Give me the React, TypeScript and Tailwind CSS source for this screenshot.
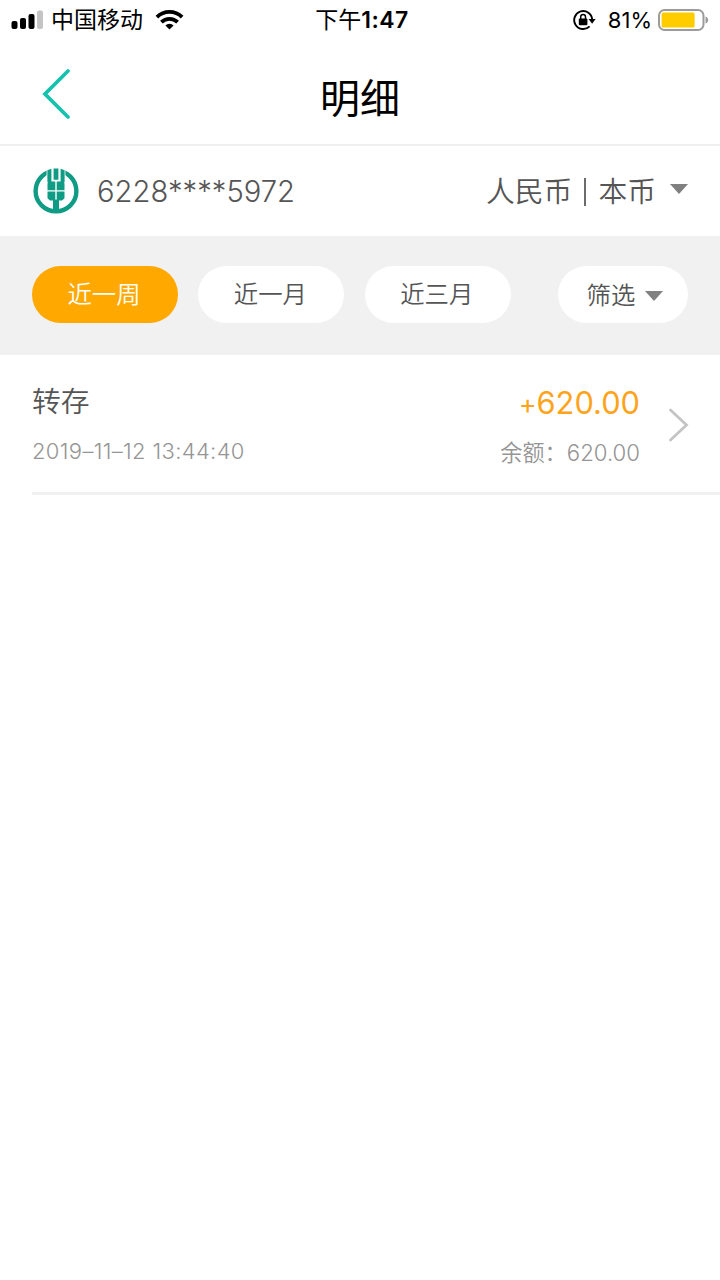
import { useState } from "react";
import clsx from "clsx";

const ranges = ["近一周", "近一月", "近三月"];

const records = [
  {
    name: "转存",
    time: "2019–11–12 13:44:40",
    amount: "620.00",
    balance: "620.00",
  },
];

function StatusBar() {
  return (
    <div className="grid h-10 grid-cols-[1fr_auto_1fr] items-center text-black">
      <div className="flex items-center pl-[11px]">
        <svg width="32" height="20" viewBox="0 0 32 20">
          <rect x="0.5" y="11" width="6" height="8" rx="2" />
          <rect x="9" y="8" width="6" height="11" rx="2" />
          <rect x="17.5" y="4" width="6" height="15" rx="2" />
          <rect x="26" y="0.5" width="6" height="18.5" rx="2" fill="#c4c4c4" />
        </svg>
        <span className="ml-2 text-[23px] leading-10">中国移动</span>
        <svg className="ml-3" width="29" height="20" viewBox="0 0 29 20">
          <g fill="none" stroke="#000" strokeWidth="3.8">
            <path d="M1.9 7.1a18 18 0 0 1 25.2 0" />
            <path d="M6.4 12.2a11.6 11.6 0 0 1 16.2 0" />
          </g>
          <path d="M14.5 19.6l-4.1-4.1a5.8 5.8 0 0 1 8.2 0z" />
        </svg>
      </div>
      <span className="ml-1 text-[23px] leading-10">
        下午<span className="font-semibold tracking-[0.5px]">1:47</span>
      </span>
      <div className="flex items-center justify-end pr-[11px]">
        <svg width="23" height="22" viewBox="0 0 23 22">
          <path
            d="M16.6 17.4a9 9 0 1 1 2.6-6.8"
            fill="none"
            stroke="#000"
            strokeWidth="1.9"
          />
          <path d="M15.6 10h7l-3.5 4.8z" />
          <rect x="5.8" y="9.6" width="8.6" height="6.6" rx="1" />
          <path
            d="M7.7 10V7.8a2.4 2.4 0 0 1 4.8 0V10"
            fill="none"
            stroke="#000"
            strokeWidth="1.5"
          />
        </svg>
        <span className="ml-3 text-[22px] leading-10">81%</span>
        <svg className="ml-1.5" width="51" height="22" viewBox="0 0 51 22">
          <rect
            x="1"
            y="1"
            width="44.5"
            height="20"
            rx="5.5"
            fill="none"
            stroke="#9b9b9b"
            strokeWidth="2"
          />
          <rect x="3.6" y="3.6" width="33" height="14.8" rx="1.5" fill="#ffcc00" />
          <path d="M47.5 7.5c3.6 1 3.6 6 0 7z" fill="#9b9b9b" />
        </svg>
      </div>
    </div>
  );
}

function BankLogo() {
  return (
    <svg width="46" height="46" viewBox="0 0 46 46">
      <circle cx="23" cy="23" r="20.4" fill="none" stroke="#109b84" strokeWidth="4.4" />
      <path d="M13.6 0h18.8v11H13.6z" fill="#fff" />
      <g fill="#109b84">
        <path d="M14.4 2.2l4-1.4v13.6h-4zM27.6.8l4 1.4v12.2h-4z" />
        <path d="M20.6 0.6h4.8v11.2h-4.8z" />
        <path d="M15.6 13.6h6.7v8.6h-7.8v-6.4zM30.4 13.6h-6.7v8.6h7.8v-6.4z" />
        <path d="M14.5 23.6h7.8v9h-5.4l-2.4-2.4zM31.5 23.6h-7.8v9h5.4l2.4-2.4z" />
        <path d="M20 31.6h6v12.9h-6z" />
      </g>
    </svg>
  );
}

function Caret() {
  return (
    <svg width="18" height="10" viewBox="0 0 18 10">
      <path d="M0 0h18L9 10z" fill="#808080" />
    </svg>
  );
}

export default function App() {
  const [active, setActive] = useState<number>(0);

  return (
    <div className="min-h-screen w-full bg-white font-['Inter','Noto_Sans_CJK_SC',sans-serif] text-[#555]">
      <StatusBar />

      <header className="grid h-[106px] grid-cols-[1fr_auto_1fr] items-center border-b-2 border-[#efefef] pt-1">
        <button className="ml-[41px] w-[30px]">
          <svg width="30" height="52" viewBox="0 0 30 52">
            <path
              d="M27 3L4 26l23 23"
              fill="none"
              stroke="#17c1ae"
              strokeWidth="3.8"
              strokeLinecap="round"
            />
          </svg>
        </button>
        <h1 className="pt-2.5 text-[40px] leading-none text-black">明细</h1>
      </header>

      <section className="flex h-[90px] items-center justify-between pl-[33px] pr-8 font-[350]">
        <div className="flex items-center">
          <BankLogo />
          <span className="ml-[18px] pt-0.5 text-[29.2px] leading-none">
            6228****5972
          </span>
        </div>
        <button className="flex items-center">
          <span className="flex items-center pt-0.5 text-[28.8px] leading-none">
            人民币
            <span className="ml-3 mr-3 h-7 w-0.5 bg-[#6c6c6c]" />
            本币
          </span>
          <span className="ml-3.5 pb-1">
            <Caret />
          </span>
        </button>
      </section>

      <section className="flex h-[119px] items-center bg-[#f1f1f1] px-8 pb-0.5 font-[350]">
        <div className="flex gap-[20.4px]">
          {ranges.map((range, index) => (
            <button
              key={range}
              className={clsx(
                "h-[57px] w-[146px] rounded-full pr-0.5 text-[24.4px] leading-none",
                index === active ? "bg-[#ffa800] text-white" : "bg-white",
              )}
              onClick={() => setActive(index)}
            >
              {range}
            </button>
          ))}
        </div>
        <button className="ml-auto flex h-[57px] w-[130px] items-center justify-center gap-2.5 rounded-full bg-white pl-1 pt-0.5 text-[24.4px] leading-none">
          筛选
          <Caret />
        </button>
      </section>

      <ul className="pl-8">
        {records.map((record) => (
          <li
            key={record.time}
            className="flex h-[140px] items-start border-b-[3px] border-[#f1f1f1] pr-[31px] pt-[30px]"
          >
            <div className="flex flex-col font-[350]">
              <span className="text-[28.8px] leading-[34px]">{record.name}</span>
              <span className="mt-4 text-[22px] leading-8 tracking-[0.35px] text-[#959595]">
                {record.time}
              </span>
            </div>
            <div className="ml-auto flex flex-col items-end">
              <span className="text-[30.8px] leading-9 text-[#ffa31a]">
                <span className="text-[27px]">+</span>
                {record.amount}
              </span>
              <span className="mt-3.5 text-[22.2px] font-[350] leading-8 text-[#959595]">
                余额：{record.balance}
              </span>
            </div>
            <svg className="ml-7 mt-[23px]" width="21" height="34" viewBox="0 0 21 34">
              <path
                d="M2.5 2L18.5 17 2.5 32"
                fill="none"
                stroke="#c4c4c4"
                strokeWidth="2.8"
                strokeLinecap="round"
              />
            </svg>
          </li>
        ))}
      </ul>
    </div>
  );
}
